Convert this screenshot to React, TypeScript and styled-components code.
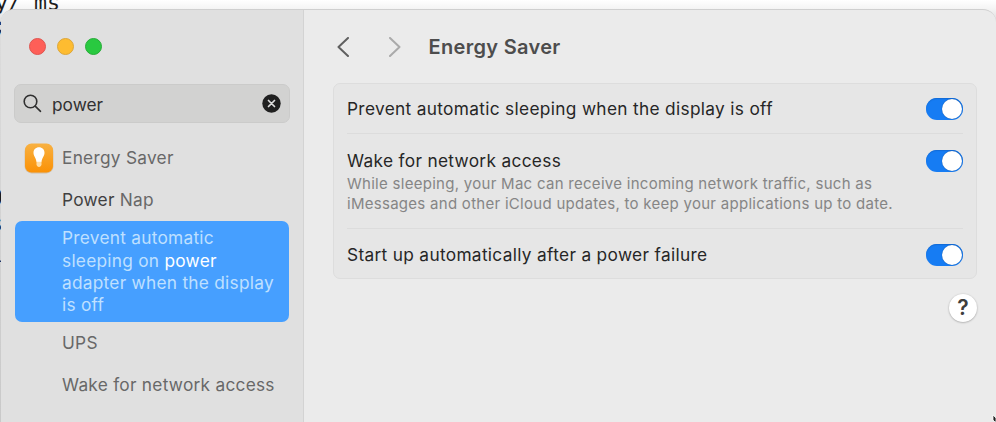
import React from "react";
import styled, { createGlobalStyle } from "styled-components";

const Global = createGlobalStyle`
  * { box-sizing: border-box; }
  html, body { margin: 0; padding: 0; overflow: hidden; }
  body { font-family: Inter, "Liberation Sans", sans-serif; background: #f8f8f8; }
`;

const Desktop = styled.div`
  position: relative;
  width: 996px;
  height: 422px;
  padding: 9px 0 0 1px;
  overflow: hidden;
  background: linear-gradient(#ffffff 0, #f4f4f4 9px, #dcdcdc 22px, #c9c9c9 100%);
`;

const Behind = styled.span<{ $x: number; $y: number }>`
  position: absolute;
  left: ${(p) => p.$x}px;
  top: ${(p) => p.$y}px;
  font: 21.6px/22px "DejaVu Sans Mono", monospace;
  white-space: pre;
  color: #1c1c1c;
`;

const Window = styled.div`
  position: relative;
  display: flex;
  height: 440px;
  border-top: 1px solid #cfcfcf;
  border-radius: 13px 13px 0 0;
  background: #ebebeb;
  overflow: hidden;
`;

const Sidebar = styled.aside`
  width: 303px;
  flex: none;
  padding: 28px 13px 0 13px;
  background: #e0e0e0;
  border-right: 1px solid #d3d3d3;
`;

const Lights = styled.div`
  display: flex;
  gap: 11px;
  padding-left: 15.400px;
`;

const Light = styled.i<{ $fill: string; $edge: string }>`
  width: 17px;
  height: 17px;
  border-radius: 50%;
  background: ${(p) => p.$fill};
  border: 1px solid ${(p) => p.$edge};
`;

const Search = styled.div`
  display: flex;
  align-items: center;
  width: 276px;
  height: 39px;
  margin-top: 29px;
  padding: 0 8px 0 8px;
  border-radius: 7px;
  border: 1px solid #cbcbca;
  background: #d2d2d1;
  color: #303030;
  font-size: 17.3px;
  svg { flex: none; }
`;

const Query = styled.span`
  flex: 1;
  margin-left: 10px;
  padding-top: 1px;
`;

const Results = styled.div`
  display: flex;
  flex-direction: column;
  width: 274px;
  margin: 14px 0 0 1px;
`;

const Result = styled.div<{ $selected?: boolean }>`
  display: flex;
  align-items: center;
  min-height: ${(p) => (p.$selected ? 101 : 42)}px;
  padding: 1px 0 0 ${(p) => (p.$selected ? 47 : 9)}px;
  border-radius: 7px;
  background: ${(p) => (p.$selected ? "#469fff" : "transparent")};
  color: ${(p) => (p.$selected ? "#bfe0ff" : "#686868")};
  font-size: 17.3px;
  line-height: 22.4px;
  letter-spacing: 0.26px;
  white-space: nowrap;
`;

const IconSlot = styled.span`
  display: flex;
  width: 38px;
  flex: none;
`;

const Match = styled.span<{ $light?: boolean }>`
  color: ${(p) => (p.$light ? "#ffffff" : "#404040")};
`;

const Main = styled.main`
  flex: 1;
  padding: 0 19px 0 29px;
`;

const Header = styled.header`
  display: flex;
  align-items: center;
  height: 73px;
  padding-left: 4px;
`;

const Title = styled.h1`
  margin: 0 0 0 27.500px;
  font-size: 20px;
  font-weight: 600;
  line-height: 24px;
  letter-spacing: 0.32px;
  color: #4d4d4d;
`;

const Card = styled.section`
  width: 644px;
  height: 196px;
  padding: 0 13px;
  border: 1px solid #dddddd;
  border-radius: 7px;
  background: #e6e6e6;
`;

const Row = styled.div<{ $height: number; $inset: number; $last?: boolean }>`
  display: flex;
  justify-content: space-between;
  height: ${(p) => p.$height}px;
  padding-top: ${(p) => p.$inset}px;
  border-bottom: ${(p) => (p.$last ? "none" : "1px solid #dcdcdc")};
`;

const Label = styled.div`
  font-size: 17.3px;
  line-height: 22px;
  letter-spacing: 0.32px;
  color: #262626;
  white-space: nowrap;
`;

const Note = styled.div`
  margin-top: 2px;
  font-size: 15px;
  line-height: 20px;
  letter-spacing: 0.28px;
  color: #858585;
`;

const Toggle = styled.span`
  display: flex;
  justify-content: flex-end;
  width: 37px;
  height: 22px;
  padding: 1px;
  border-radius: 11px;
  background: #167cf3;
  box-shadow: inset 0 1px 1px #126bd6;
  &::after {
    content: "";
    width: 20px;
    height: 20px;
    border-radius: 50%;
    background: #ffffff;
    box-shadow: 0 0 1px #0b4287;
  }
`;

const Footer = styled.footer`
  display: flex;
  justify-content: flex-end;
  padding-top: 15px;
`;

const Help = styled.button`
  width: 28px;
  height: 28px;
  padding: 0;
  border: 0;
  border-radius: 50%;
  background: #ffffff;
  box-shadow: 0 0.5px 2px rgba(0, 0, 0, 0.35);
  font: 600 21px/28px Inter, sans-serif;
  color: #3d3d3d;
`;

const Cursor = styled.svg`
  position: absolute;
  left: 991px;
  top: 415px;
`;

const Chevron = ({ back }: { back?: boolean }) => (
  <svg width="13" height="20" viewBox="0 0 13 20" fill="none" stroke={back ? "#606060" : "#aaaaaa"} strokeWidth="2" strokeLinecap="round" strokeLinejoin="round">
    <path d={back ? "M11 1L1.5 10L11 19" : "M2 1L11.5 10L2 19"} />
  </svg>
);

const Spacer = styled.span`
  width: 38px;
`;

const Bulb = () => (
  <svg width="30" height="31" viewBox="0 0 30 31">
    <defs>
      <linearGradient id="amber" x1="0" y1="0" x2="0" y2="1">
        <stop offset="0" stopColor="#f8b142" />
        <stop offset="1" stopColor="#fb9105" />
      </linearGradient>
    </defs>
    <rect x="0.6" y="1.4" width="28.8" height="29" rx="7" fill="#c9a97c" opacity="0.6" />
    <rect x="1" y="0.5" width="28" height="29" rx="6.5" fill="url(#amber)" />
    <path d="M15 4.300c-3.200 0-5.500 2.300-5.500 5.500 0 3.400 2.500 5 3 9.200h5c.5-4.200 3-5.800 3-9.200 0-3.200-2.300-5.500-5.500-5.500z" fill="#fff" />
    <path d="M12.500 18.800h5v2.500c0 1.500-1 2.600-2.500 2.600s-2.500-1.100-2.500-2.600z" fill="#ffdda6" />
  </svg>
);

export default function App() {
  return (
    <Desktop>
      <Global />
      <Behind $x={-5} $y={-8}>{"y/ ms"}</Behind>
      <Behind $x={-7} $y={15}>;</Behind>
      <Behind $x={-10} $y={187}>0</Behind>
      <Behind $x={-10} $y={213}>s</Behind>
      <Behind $x={-10} $y={244}>l</Behind>
      <Window>
        <Sidebar>
          <Lights>
            <Light $fill="#fe5f58" $edge="#df5550" />
            <Light $fill="#febc30" $edge="#dca63a" />
            <Light $fill="#29c940" $edge="#27ac38" />
          </Lights>
          <Search>
            <svg width="19" height="19" viewBox="0 0 19 19" fill="none" stroke="#303030" strokeWidth="1.6" strokeLinecap="round">
              <circle cx="7.500" cy="7.500" r="6.300" />
              <path d="M12.200 12.200L17.500 17.300" />
            </svg>
            <Query>power</Query>
            <svg width="19" height="19" viewBox="0 0 19 19">
              <circle cx="9.500" cy="9.500" r="9.200" fill="#202020" />
              <path d="M6.500 6.500L12.500 12.500M12.500 6.500L6.500 12.500" stroke="#dddddd" strokeWidth="1.700" strokeLinecap="round" />
            </svg>
          </Search>
          <Results>
            <Result><IconSlot><Bulb /></IconSlot>Energy Saver</Result>
            <Result><IconSlot /><span><Match>Power</Match> Nap</span></Result>
            <Result $selected>
              <span>
                Prevent automatic<br />
                sleeping on <Match $light>power</Match><br />
                adapter when the display<br />
                is off
              </span>
            </Result>
            <Result><IconSlot />UPS</Result>
            <Result><IconSlot />Wake for network access</Result>
          </Results>
        </Sidebar>
        <Main>
          <Header>
            <Chevron back />
            <Spacer />
            <Chevron />
            <Title>Energy Saver</Title>
          </Header>
          <Card>
            <Row $height={50} $inset={14}>
              <Label>Prevent automatic sleeping when the display is off</Label>
              <Toggle />
            </Row>
            <Row $height={95} $inset={16}>
              <Label>
                Wake for network access
                <Note>
                  While sleeping, your Mac can receive incoming network traffic, such as<br />
                  iMessages and other iCloud updates, to keep your applications up to date.
                </Note>
              </Label>
              <Toggle />
            </Row>
            <Row $height={49} $inset={15} $last>
              <Label>Start up automatically after a power failure</Label>
              <Toggle />
            </Row>
          </Card>
          <Footer><Help>?</Help></Footer>
        </Main>
      </Window>
      <Cursor width="5" height="7" viewBox="0 0 5 7">
        <path d="M2 0L5 3V7H4L2 5z" fill="#222" stroke="#fff" strokeWidth="0.800" />
      </Cursor>
    </Desktop>
  );
}
